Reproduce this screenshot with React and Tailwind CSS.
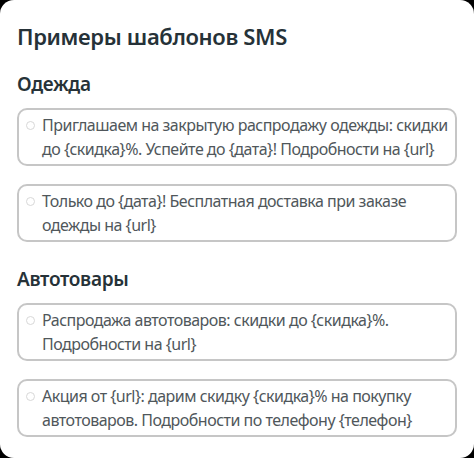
import React from "react";

const groups = [
  {
    title: "Одежда",
    items: [
      [
        "Приглашаем на закрытую распродажу одежды: скидки",
        "до {скидка}%. Успейте до {дата}! Подробности на {url}",
      ],
      ["Только до {дата}! Бесплатная доставка при заказе", "одежды на {url}"],
    ],
  },
  {
    title: "Автотовары",
    items: [
      ["Распродажа автотоваров: скидки до {скидка}%.", "Подробности на {url}"],
      [
        "Акция от {url}: дарим скидку {скидка}% на покупку",
        "автотоваров. Подробности по телефону {телефон}",
      ],
    ],
  },
];

const TemplateCard = ({ lines }) => (
  <label className="flex items-start gap-[7px] rounded-[10px] border-2 border-[#c6c6c6] pl-[7px] pr-1 py-[3px] cursor-pointer">
    <span className="mt-[8px] h-[9px] w-[9px] shrink-0 rounded-full border border-[#d8d8d8]" />
    <span className="text-[16px] leading-[24px] tracking-[-0.5px] text-[#50575b] whitespace-nowrap">
      {lines.map((line) => (
        <span key={line} className="block">
          {line}
        </span>
      ))}
    </span>
  </label>
);

const App = () => {
  return (
    <div className="w-[474px] h-[458px] bg-black">
      <div
        className="w-full h-full bg-white rounded-[14px] px-[17px] pt-[22px]"
        style={{ fontFamily: '"Noto Sans", "Open Sans", sans-serif' }}
      >
        <h2 className="text-[22px] leading-[28px] font-semibold tracking-[-0.35px] text-[#263238]">
          Примеры шаблонов SMS
        </h2>

        {groups.map((group, gi) => (
          <div key={group.title} className={gi === 0 ? "mt-[22px]" : "mt-[25px]"}>
            <h3 className="text-[19px] leading-[24px] font-semibold tracking-[-0.3px] text-[#263238]">
              {group.title}
            </h3>
            <div className="mt-[12px] flex flex-col gap-[18px]">
              {group.items.map((lines) => (
                <TemplateCard key={lines[0]} lines={lines} />
              ))}
            </div>
          </div>
        ))}
      </div>
    </div>
  );
};

export default App;
